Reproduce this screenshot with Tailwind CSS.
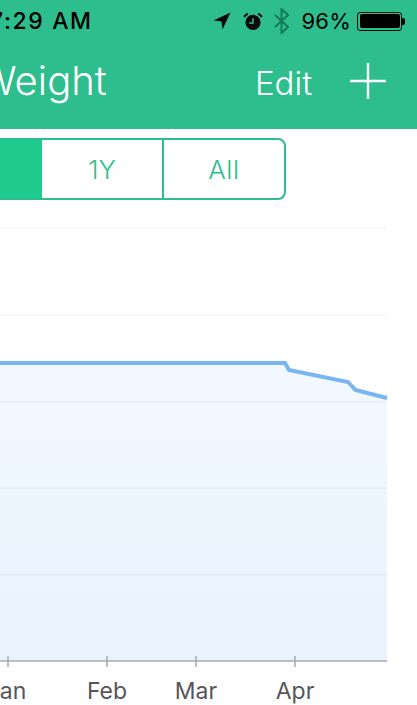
<!doctype html>
<html lang="en">
<head>
    <meta charset="utf-8">
    <title>Weight</title>
    <script src="https://cdn.jsdelivr.net/npm/@tailwindcss/browser@4"></script>
</head>
<body class="w-[417px] h-[705px] overflow-hidden bg-white font-['Inter','Liberation_Sans',sans-serif]">

<header class="h-[129px] bg-[#2ebe8d] overflow-hidden">
    <!-- status bar -->
    <div class="h-[42px] flex items-center text-black">
        <span class="ml-[-10px] text-[23px] font-medium tracking-[1.6px] whitespace-nowrap">7:29 AM</span>
        <div class="ml-auto flex items-center">
            <svg class="w-[18px] h-[18px]" viewBox="0 0 18 18"><path d="M17.5 0.5 L0.5 8.5 L8.5 9.5 L9.5 17.5 Z" fill="#0a0a0a"/></svg>
            <svg class="ml-[12px] w-[20px] h-[19px]" viewBox="0 0 21 20">
                <circle cx="10.5" cy="11" r="8" fill="#0a0a0a"/>
                <path d="M10.5 6.5 V11.5 H6.5" fill="none" stroke="#2ebe8d" stroke-width="1.6"/>
                <path d="M1 5 L5 1.5 M20 5 L16 1.5" stroke="#0a0a0a" stroke-width="2.2" fill="none"/>
            </svg>
            <svg class="ml-[11px] w-[15px] h-[26px]" viewBox="0 0 15 26"><path d="M1 7 L14 19 L7.5 25 V1 L14 7 L1 19" fill="none" stroke="#147a58" stroke-width="2"/></svg>
            <span class="ml-[13px] text-[22px] font-normal tracking-[0.2px]">96%</span>
            <div class="ml-[6px] flex items-center">
                <div class="w-[45px] h-[19px] rounded-[3px] border border-[#0a0a0a] p-[1.5px]">
                    <div class="w-full h-full rounded-[2px] bg-black"></div>
                </div>
                <div class="w-[3px] h-[7px] rounded-r-[2px] bg-black"></div>
            </div>
            <div class="w-[12px]"></div>
        </div>
    </div>
    <!-- nav bar -->
    <div class="h-[78px] flex items-center text-white">
        <h1 class="ml-[-22px] text-[40px] font-light leading-none whitespace-nowrap">Weight</h1>
        <span class="ml-auto pt-[5px] text-[33px] font-light leading-none">Edit</span>
        <svg class="ml-[38px] mr-[31px] w-[36px] h-[36px]" viewBox="0 0 36 36"><path d="M18 0 V36 M0 18 H36" stroke="#fff" stroke-width="2.4" fill="none"/></svg>
    </div>
</header>

<!-- range selector -->
<div class="mt-[9px] ml-[-40px] w-[326px] h-[62px] flex rounded-[8px] border-2 border-[#2ebe8d] overflow-hidden text-[#2ebe8d] text-[26px] font-light">
    <div class="w-[80px] bg-[#1fcb8f]"></div>
    <div class="w-[122px] border-r-2 border-[#2ebe8d] flex items-center justify-center">1Y</div>
    <div class="flex-1 flex items-center justify-center tracking-[0.6px]">All</div>
</div>

<!-- chart -->
<svg class="block" width="417" height="505" viewBox="0 200 417 505">
    <defs>
        <linearGradient id="area" x1="0" y1="0" x2="0" y2="1">
            <stop offset="0" stop-color="#f2f8ff"/>
            <stop offset="1" stop-color="#e8f3fe"/>
        </linearGradient>
    </defs>
    <path d="M0 363 H285 L289 370 L348 382 L355.5 390 L387 398 V661 H0 Z" fill="url(#area)"/>
    <g stroke="#000" stroke-opacity="0.045" stroke-width="1.5" fill="none">
        <path d="M0 228 H387"/>
        <path d="M0 315 H387"/>
        <path d="M0 402 H387"/>
        <path d="M0 488 H387"/>
        <path d="M0 575 H387"/>
    </g>
    <path d="M0 363 H285 L289 370 L348 382 L355.5 390 L387 398" fill="none" stroke="#79b6f0" stroke-width="4"/>
    <g stroke="#a9a9ad" stroke-width="1.5" fill="none">
        <path d="M0 661 H387"/>
        <path d="M8 656 V667"/>
        <path d="M107 656 V667"/>
        <path d="M196 656 V667"/>
        <path d="M295 656 V667"/>
    </g>
    <g class="text-[23px]" fill="#55555a" text-anchor="middle">
        <text x="13" y="699">an</text>
        <text x="107" y="699">Feb</text>
        <text x="196" y="699">Mar</text>
        <text x="295" y="699">Apr</text>
    </g>
</svg>

</body>
</html>
